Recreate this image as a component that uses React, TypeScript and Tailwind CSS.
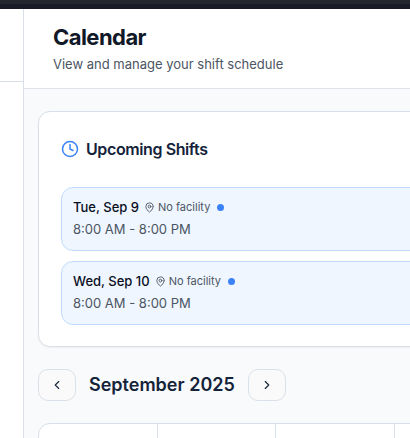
import { ChevronLeft, ChevronRight, Clock, MapPin } from "lucide-react";

type Shift = { day: string; facility: string; time: string };

const shifts: Shift[] = [
  { day: "Tue, Sep 9", facility: "No facility", time: "8:00 AM - 8:00 PM" },
  { day: "Wed, Sep 10", facility: "No facility", time: "8:00 AM - 8:00 PM" },
];

function ShiftRow({ shift }: { shift: Shift }) {
  return (
    <li className="rounded-xl border border-[#bfdbfe] bg-[#eff6ff] px-[11px] pt-[9px] pb-[11px]">
      <div className="flex h-5 items-center">
        <span className="text-[13px] leading-5 font-medium text-[#0a0f1e]">{shift.day}</span>
        <span className="ml-[5px] flex items-center gap-[3px] text-[11px] leading-5 text-[#4b5563]">
          <MapPin size={11} aria-hidden="true" />
          {shift.facility}
        </span>
        <span className="ml-[7px] size-[7px] rounded-full bg-[#3b82f6]" />
      </div>
      <p className="mt-[2px] text-[13px] leading-5 text-[#4b5563]">{shift.time}</p>
    </li>
  );
}

const navButton =
  "flex h-8 w-[38px] items-center justify-center rounded-[10px] border border-[#dbe1e9] bg-[#fafafa] text-[#1b2a3d]";

export default function App() {
  return (
    <div className="flex h-screen flex-col overflow-hidden bg-[#f8fafc] font-['Inter',sans-serif] text-[#14233a]">
      <div className="h-[9px] shrink-0 border-t-4 border-[#23262f] bg-[#181b26]" />
      <div className="flex min-h-0 flex-1">
        <aside className="w-6 shrink-0 border-r border-[#d9dee7] bg-white">
          <div className="h-[73px] border-b border-[#d9dee7]" />
        </aside>
        <div className="min-w-0 flex-1">
          <header className="border-b border-[#dfe3e9] bg-white px-[29px] pt-[13px] pb-[14px]">
            <h1 className="text-[22px] leading-[30px] font-bold tracking-tight text-[#111827]">Calendar</h1>
            <p className="mt-[2px] text-[13px] leading-5 text-[#4b5563]">
              View and manage your shift schedule
            </p>
          </header>
          <main className="w-[860px] px-[14px] pt-[22px]">
            <section className="rounded-xl border border-[#d9e0e9] bg-white px-[22px] pt-[22px] pb-[21px] shadow-xs">
              <h2 className="flex h-[30px] items-center gap-[7px] text-base font-semibold tracking-tight">
                <Clock size={18} className="text-[#3b82f6]" aria-hidden="true" />
                Upcoming Shifts
              </h2>
              <ul className="mt-[23px] flex flex-col gap-[10px]">
                {shifts.map((shift) => (
                  <ShiftRow key={shift.day} shift={shift} />
                ))}
              </ul>
            </section>
            <div className="mt-[22px] flex items-center gap-[13px]">
              <button type="button" aria-label="Previous month" className={navButton}>
                <ChevronLeft size={14} />
              </button>
              <h2 className="text-lg leading-7 font-semibold">September 2025</h2>
              <button type="button" aria-label="Next month" className={navButton}>
                <ChevronRight size={14} />
              </button>
            </div>
            <div className="mt-[22px] grid grid-cols-7 overflow-hidden rounded-xl border border-[#d9e0e9] bg-white">
              {Array.from({ length: 7 }, (_, i) => (
                <div key={i} className="h-24 border-r border-[#d9e0e9] last:border-r-0" />
              ))}
            </div>
          </main>
        </div>
      </div>
    </div>
  );
}
